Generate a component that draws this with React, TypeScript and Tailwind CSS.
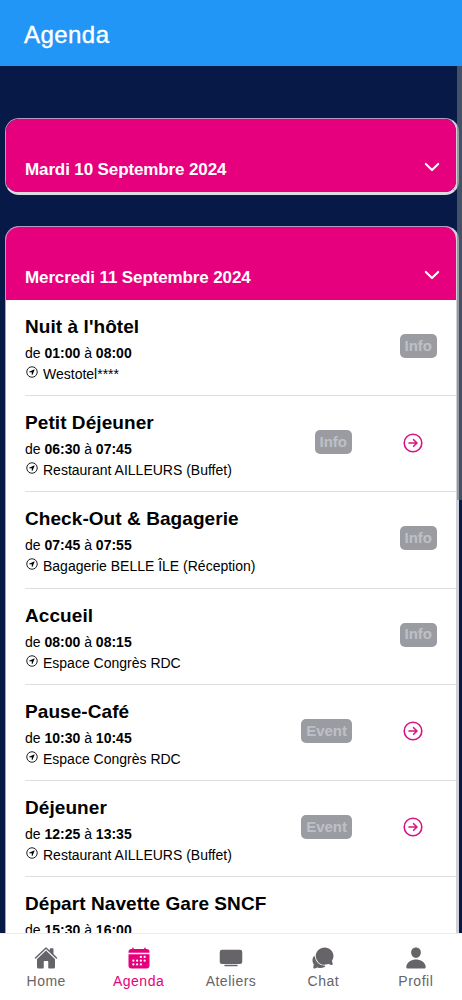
import {
  IoCalendar,
  IoChatbubbles,
  IoChevronDown,
  IoHome,
  IoNavigateCircleOutline,
  IoPerson,
  IoTv,
} from "react-icons/io5";
import type { IconType } from "react-icons";

type Session = {
  title: string;
  start: string;
  end: string;
  place: string;
  tag?: "Info" | "Event";
  link?: boolean;
};

const sessions: Session[] = [
  { title: "Nuit à l'hôtel", start: "01:00", end: "08:00", place: "Westotel****", tag: "Info" },
  { title: "Petit Déjeuner", start: "06:30", end: "07:45", place: "Restaurant AILLEURS (Buffet)", tag: "Info", link: true },
  { title: "Check-Out & Bagagerie", start: "07:45", end: "07:55", place: "Bagagerie BELLE ÎLE (Réception)", tag: "Info" },
  { title: "Accueil", start: "08:00", end: "08:15", place: "Espace Congrès RDC", tag: "Info" },
  { title: "Pause-Café", start: "10:30", end: "10:45", place: "Espace Congrès RDC", tag: "Event", link: true },
  { title: "Déjeuner", start: "12:25", end: "13:35", place: "Restaurant AILLEURS (Buffet)", tag: "Event", link: true },
  { title: "Départ Navette Gare SNCF", start: "15:30", end: "16:00", place: "Espace Congrès RDC" },
];

const tabs: { label: string; icon: IconType; active?: boolean }[] = [
  { label: "Home", icon: IoHome },
  { label: "Agenda", icon: IoCalendar, active: true },
  { label: "Ateliers", icon: IoTv },
  { label: "Chat", icon: IoChatbubbles },
  { label: "Profil", icon: IoPerson },
];

function DayHeader({ label }: { label: string }) {
  return (
    <div className="flex h-[73px] items-end justify-between bg-[#e6007e] pb-3 pl-[19px] pr-[13px] text-white">
      <h2 className="text-[17px] leading-5 font-bold tracking-[-0.12px]">{label}</h2>
      <IoChevronDown className="mb-[2px] size-[22px]" />
    </div>
  );
}

function ArrowCircle() {
  return (
    <svg viewBox="0 0 20 20" className="mt-px size-5 fill-none stroke-[#d61583]" strokeWidth="1.6" strokeLinecap="round" strokeLinejoin="round">
      <circle cx="10" cy="10" r="8.8" />
      <path d="M6 10h7.7M10.6 6.7 14 10l-3.4 3.3" />
    </svg>
  );
}

function SessionRow({ session }: { session: Session }) {
  return (
    <li className="ml-[19px] flex h-[96.2px] items-start justify-between border-b border-[#dedede] pt-4">
      <div className="text-black">
        <h3 className="text-[19px] leading-[22px] font-bold tracking-[0.07px]">{session.title}</h3>
        <p className="mt-[5px] text-sm leading-[21px]">
          de <b>{session.start}</b> à <b>{session.end}</b>
        </p>
        <p className="flex text-sm leading-[21px]">
          <IoNavigateCircleOutline className="mt-px mr-1 size-[14px]" />
          {session.place}
        </p>
      </div>
      <div className={session.link ? "mt-[18px] flex items-center gap-[51px] pr-[33px]" : "mt-[18px] flex pr-[19px]"}>
        {session.tag && (
          <span className="flex h-6 items-center rounded-[5px] bg-[#9a9ca1] px-[5px] text-[15px] font-bold text-[#bec0c7]">
            {session.tag}
          </span>
        )}
        {session.link && <ArrowCircle />}
      </div>
    </li>
  );
}

export default function App() {
  return (
    <div className="relative flex h-[1000px] w-[462px] flex-col overflow-hidden bg-[#071946] font-['Liberation_Sans',Arial,sans-serif]">
      <header className="flex h-[66px] shrink-0 items-center bg-[#2196f6] pt-1 pl-6">
        <h1 className="text-2xl tracking-[0.45px] text-white [-webkit-text-stroke:0.4px_white]">Agenda</h1>
      </header>

      <main className="min-h-0 flex-1 overflow-hidden pt-[52px] pr-[3px] pl-[5px]">
        <section className="overflow-hidden rounded-[14px] border border-r-[3px] border-b-[3px] border-[#b59abf] border-r-[#cfd0d8] border-b-[#dcdbe0]">
          <DayHeader label="Mardi 10 Septembre 2024" />
        </section>

        <section className="mt-[31px] overflow-hidden rounded-t-[14px] border border-r-[3px] border-[#b59abf] border-r-[#cfd0d8] bg-white">
          <DayHeader label="Mercredi 11 Septembre 2024" />
          <ul>
            {sessions.map((session) => (
              <SessionRow key={session.title} session={session} />
            ))}
          </ul>
        </section>
      </main>

      {/* Barre de défilement */}
      <div className="absolute top-[66px] right-0 h-[434px] w-[5px] bg-[#6d7479]/60" />

      <nav className="z-10 grid h-[67px] shrink-0 grid-cols-5 border-t border-[#ececec] bg-white">
        {tabs.map(({ label, icon: Icon, active }) => (
          <a
            key={label}
            className={
              active
                ? "flex flex-col items-center pt-3 text-[#e6007e]"
                : "flex flex-col items-center pt-3 text-[#666468]"
            }
          >
            <Icon className="size-6" />
            <span className="mt-0.5 text-sm leading-[18px] tracking-[0.5px]">{label}</span>
          </a>
        ))}
      </nav>
    </div>
  );
}
